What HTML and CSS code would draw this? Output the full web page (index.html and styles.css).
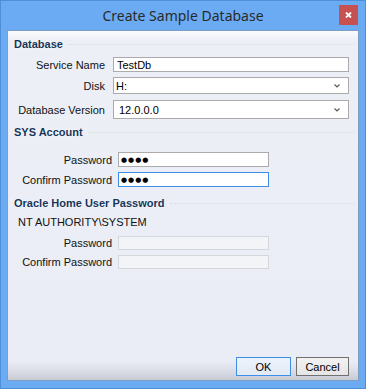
FILE: index.html
```html
<!DOCTYPE html>
<html lang="en">
<head>
<meta charset="UTF-8">
<title>Create Sample Database</title>
    <link rel="stylesheet" href="styles.css">
</head>
<body>
<div class="window">
    <div class="titlebar">
        <div class="title">Create Sample Database</div>
        <div class="close-btn">
            <svg width="7" height="6" viewBox="0 0 7 6"><path d="M1 0.5 L6 5.5 M6 0.5 L1 5.5" stroke="#ffffff" stroke-width="1.8"/></svg>
        </div>
    </div>

    <div class="client">
        <!-- Database -->
        <div class="group-header first">Database</div>
        <div class="row db-row">
            <label>Service Name</label>
            <div class="field text-field">TestDb</div>
        </div>
        <div class="row db-row gap5">
            <label>Disk</label>
            <div class="field combo combo-disk">
                <span>H:</span>
                <svg class="chevron" width="6" height="4" viewBox="0 0 6 4"><path d="M0.5 0.5 L3 3 L5.5 0.5" stroke="#5a5a5a" stroke-width="1.2" fill="none"/></svg>
            </div>
        </div>
        <div class="row db-row gap6">
            <label>Database Version</label>
            <div class="field combo combo-version">
                <span class="version">12.0.0.0</span>
                <svg class="chevron" width="6" height="4" viewBox="0 0 6 4"><path d="M0.5 0.5 L3 3 L5.5 0.5" stroke="#5a5a5a" stroke-width="1.2" fill="none"/></svg>
            </div>
        </div>

        <!-- SYS Account -->
        <div class="group-header sys">SYS Account</div>
        <div class="row pw-row first-pw">
            <label>Password</label>
            <div class="field pw-field"><span class="dots">&#9679;&#9679;&#9679;&#9679;</span></div>
        </div>
        <div class="row pw-row gap5">
            <label>Confirm Password</label>
            <div class="field pw-field focused"><span class="dots">&#9679;&#9679;&#9679;&#9679;</span></div>
        </div>

        <!-- Oracle Home User -->
        <div class="group-header oracle">Oracle Home User Password</div>
        <div class="account-name">NT AUTHORITY\SYSTEM</div>
        <div class="row pw-row first-disabled">
            <label>Password</label>
            <div class="field disabled"></div>
        </div>
        <div class="row pw-row gap5">
            <label>Confirm Password</label>
            <div class="field disabled"></div>
        </div>

        <div class="spacer"></div>

        <div class="buttons">
            <button class="btn btn-ok">OK</button>
            <button class="btn">Cancel</button>
        </div>
    </div>
</div>
</body>
</html>
```

FILE: styles.css
```css
body {
    margin: 0;
    padding: 0;
    font-family: 'Liberation Sans', Arial, sans-serif;
    font-size: 11px;
    background: #6aabf4;
}
.window {
    width: 366px;
    height: 389px;
    box-sizing: border-box;
    border: 1px solid #4f8fd8;
    background-color: #6aabf4;
    display: flex;
    flex-direction: column;
    padding: 0 6px 7px 6px;
}
.titlebar {
    height: 29px;
    flex: none;
    display: grid;
    grid-template-columns: 1fr auto 1fr;
    align-items: start;
}
.title {
    grid-column: 2;
    font-family: 'Noto Sans', 'Open Sans', sans-serif;
    font-size: 14px;
    color: #2a2a2a;
    line-height: 20px;
    padding-top: 5px;
}
.close-btn {
    grid-column: 3;
    justify-self: end;
    margin-top: 4px;
    margin-right: 1px;
    width: 19px;
    height: 20px;
    background-color: #c75050;
    display: flex;
    align-items: center;
    justify-content: center;
}
.client {
    flex: 1;
    border: 1px solid #7f9cc2;
    background: linear-gradient(to bottom, #fbfcfd 0px, #eceff6 9px, #eaedf5 330px, #dadde5 340px, #c8cbd3 349px);
    display: flex;
    flex-direction: column;
    padding: 0 9px 4px 0;
}
.group-header {
    display: flex;
    align-items: center;
    height: 13px;
    font-weight: bold;
    color: #163559;
    text-shadow: 0 0 2px #ffffff;
    padding-left: 6px;
    margin-right: -5px;
}
.group-header::after {
    content: "";
    flex: 1;
    margin-left: 6px;
    border-top: 1px dotted #d6d9e0;
    margin-top: 1px;
}
.group-header.first {
    margin-top: 6px;
}
.group-header.sys {
    margin-top: 6px;
}
.group-header.oracle {
    margin-top: 9px;
}
.row {
    display: flex;
    align-items: center;
    color: #111111;
}
.row label {
    text-align: right;
    white-space: nowrap;
}
.db-row {
    margin-top: 7px;
}
.db-row label {
    width: 97px;
    margin-right: 8px;
}
.gap5 {
    margin-top: 5px;
}
.gap6 {
    margin-top: 6px;
}
.field {
    box-sizing: border-box;
    border: 1px solid #ababab;
    background-color: #ffffff;
    display: flex;
    align-items: center;
    color: #000000;
}
.text-field {
    width: 236px;
    height: 15px;
    padding-left: 3px;
}
.combo {
    width: 236px;
    justify-content: space-between;
    padding: 0 8px 0 2px;
}
.combo-disk {
    height: 17px;
}
.combo-version {
    height: 19px;
}
.version {
    padding-left: 3px;
}
.pw-row label {
    width: 104px;
    margin-right: 6px;
}
.first-pw {
    margin-top: 14px;
}
.pw-field {
    width: 151px;
    height: 15px;
    padding-left: 2px;
}
.focused {
    border-color: #3c8fe6;
}
.dots {
    font-family: 'DejaVu Sans', sans-serif;
    font-size: 7px;
    letter-spacing: 1px;
    line-height: 10px;
}
.disabled {
    width: 151px;
    height: 14px;
    background-color: #f3f4f7;
    border-color: #d5d7dd;
}
.account-name {
    margin-top: 7px;
    padding-left: 10px;
    line-height: 13px;
    color: #111111;
}
.first-disabled {
    margin-top: 7px;
}
.spacer {
    flex: 1;
}
.buttons {
    display: flex;
    justify-content: flex-end;
    gap: 5px;
}
.btn {
    font-family: 'Liberation Sans', Arial, sans-serif;
    font-size: 11px;
    color: #000000;
    height: 19px;
    padding: 0;
    border: 1px solid #707070;
    background: linear-gradient(to bottom, #f2f2f2, #e5e5e5);
    width: 53px;
}
.btn-ok {
    width: 55px;
    border-color: #3c8fe6;
    background: linear-gradient(to bottom, #edf3fb, #e2e9f3);
}
```
